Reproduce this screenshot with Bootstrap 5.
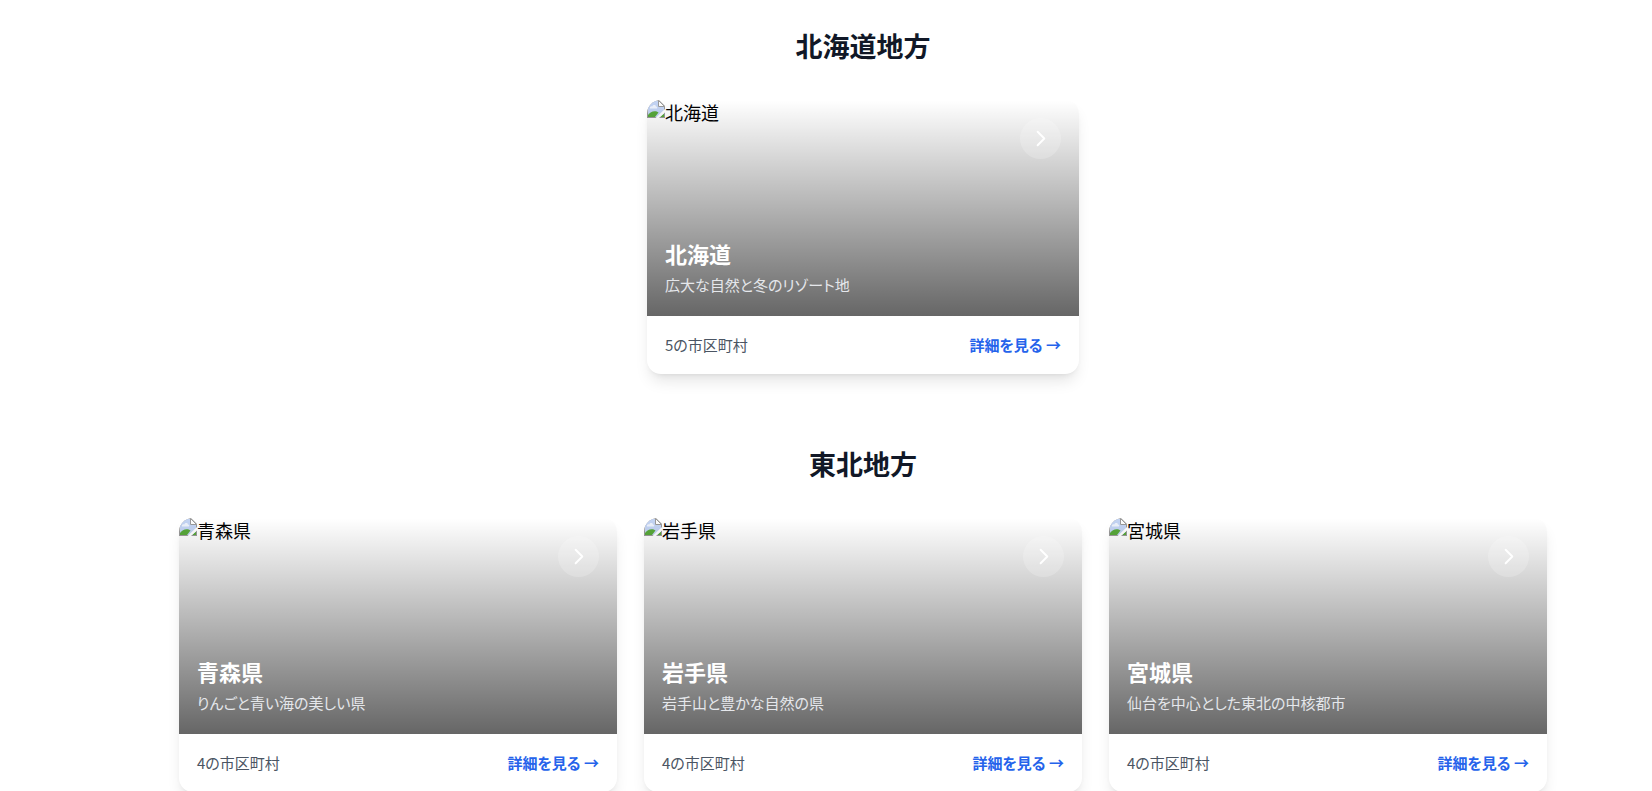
<!DOCTYPE html>
<html lang="ja">
<head>
<meta charset="utf-8">
<meta name="viewport" content="width=device-width, initial-scale=1">
<title>地方一覧</title>
<link href="https://cdn.jsdelivr.net/npm/bootstrap@5.3.0/dist/css/bootstrap.min.css" rel="stylesheet">
<style>
  body { font-family: "Noto Sans CJK JP", sans-serif; font-size: 18px; color: #000; background: #fff; }
  .regions { padding: 28px 36px 0 110px; }
  .regions-inner { max-width: 1368px; }
  .region { margin-bottom: 72px; }
  .region:last-child { margin-bottom: 0; }
  .region-title { font-size: 27px; line-height: 36px; font-weight: 600; color: #111827; margin-bottom: 36px; }
  .pref-grid { --bs-gutter-x: 27px; --bs-gutter-y: 27px; }
  .pref-single { max-width: 432px; }
  .pref-card { border: 0; border-radius: 14px; box-shadow: 0 10px 15px -3px rgba(0,0,0,.1), 0 4px 6px -4px rgba(0,0,0,.1); }
  .pref-photo { height: 216px; }
  .pref-alt { line-height: 25px; }
  .pref-alt svg { width: 18px; height: 18px; }
  .pref-shade { padding: 18px 18px 20px; background: linear-gradient(to top, rgba(0,0,0,.6), transparent); }
  .pref-name { font-size: 22px; line-height: 31px; font-weight: 700; margin-bottom: 5px; }
  .pref-copy { font-size: 15px; line-height: 22px; color: #e5e7eb; font-feature-settings: "palt"; }
  .pref-go { width: 41px; height: 41px; background: rgba(255,255,255,.2); }
  .pref-foot { padding: 18px; font-size: 15px; line-height: 22px; color: #4b5563; font-feature-settings: "palt"; }
  .pref-foot a { font-weight: 600; color: #2563eb; }
</style>
</head>
<body>
<svg class="d-none" aria-hidden="true">
  <symbol id="missing" viewBox="0 0 18 18">
    <path d="M0 0h12l6 6v12H0z" fill="#9a9a9a"/>
    <path d="M1 1h10.500L17 6.500V17H1z" fill="#c3d4f4"/>
    <path d="M3 8.500c-.4-1.800 1.200-2.700 2.300-2C6 4.500 8.600 4.600 9 6.500c1.400 0 1.700 1.500.8 2z" fill="#eef3fd"/>
    <path d="M1 17v-2c2.500-4 7.500-5 10.500-2.500L8 17z" fill="#58a83a"/>
    <path d="M13 17l4-3.500V17z" fill="#58a83a"/>
    <path d="M11.500.5V6.500h6z" fill="#fff" stroke="#9a9a9a"/>
    <path d="M18 9v3.500L12 18H8.500z" fill="#fff"/>
  </symbol>
  <symbol id="chevron" viewBox="0 0 24 24">
    <path d="M9 5l7 7-7 7" fill="none" stroke="#fff" stroke-width="2" stroke-linecap="round" stroke-linejoin="round"/>
  </symbol>
</svg>
<main class="regions vh-100 overflow-hidden">
  <div class="regions-inner mx-auto">
    <section class="region">
      <h2 class="region-title text-center">北海道地方</h2>
      <div class="pref-single mx-auto">
        <article class="card pref-card overflow-hidden">
          <div class="pref-photo position-relative">
            <div class="pref-alt d-flex align-items-start"><svg><use href="#missing"/></svg><span>北海道</span></div>
            <div class="pref-shade position-absolute top-0 start-0 w-100 h-100 d-flex flex-column justify-content-between">
              <span class="pref-go rounded-circle d-flex align-items-center justify-content-center align-self-end"><svg width="23" height="23"><use href="#chevron"/></svg></span>
              <div><h3 class="pref-name text-white">北海道</h3><p class="pref-copy mb-0">広大な自然と冬のリゾート地</p></div>
            </div>
          </div>
          <div class="pref-foot d-flex justify-content-between align-items-center"><span>5の市区町村</span><a href="#" class="text-decoration-none">詳細を見る →</a></div>
        </article>
      </div>
    </section>
    <section class="region">
      <h2 class="region-title text-center">東北地方</h2>
      <div class="row row-cols-1 row-cols-md-3 pref-grid">
        <div class="col">
          <article class="card pref-card overflow-hidden">
            <div class="pref-photo position-relative">
              <div class="pref-alt d-flex align-items-start"><svg><use href="#missing"/></svg><span>青森県</span></div>
              <div class="pref-shade position-absolute top-0 start-0 w-100 h-100 d-flex flex-column justify-content-between">
                <span class="pref-go rounded-circle d-flex align-items-center justify-content-center align-self-end"><svg width="23" height="23"><use href="#chevron"/></svg></span>
                <div><h3 class="pref-name text-white">青森県</h3><p class="pref-copy mb-0">りんごと青い海の美しい県</p></div>
              </div>
            </div>
            <div class="pref-foot d-flex justify-content-between align-items-center"><span>4の市区町村</span><a href="#" class="text-decoration-none">詳細を見る →</a></div>
          </article>
        </div>
        <div class="col">
          <article class="card pref-card overflow-hidden">
            <div class="pref-photo position-relative">
              <div class="pref-alt d-flex align-items-start"><svg><use href="#missing"/></svg><span>岩手県</span></div>
              <div class="pref-shade position-absolute top-0 start-0 w-100 h-100 d-flex flex-column justify-content-between">
                <span class="pref-go rounded-circle d-flex align-items-center justify-content-center align-self-end"><svg width="23" height="23"><use href="#chevron"/></svg></span>
                <div><h3 class="pref-name text-white">岩手県</h3><p class="pref-copy mb-0">岩手山と豊かな自然の県</p></div>
              </div>
            </div>
            <div class="pref-foot d-flex justify-content-between align-items-center"><span>4の市区町村</span><a href="#" class="text-decoration-none">詳細を見る →</a></div>
          </article>
        </div>
        <div class="col">
          <article class="card pref-card overflow-hidden">
            <div class="pref-photo position-relative">
              <div class="pref-alt d-flex align-items-start"><svg><use href="#missing"/></svg><span>宮城県</span></div>
              <div class="pref-shade position-absolute top-0 start-0 w-100 h-100 d-flex flex-column justify-content-between">
                <span class="pref-go rounded-circle d-flex align-items-center justify-content-center align-self-end"><svg width="23" height="23"><use href="#chevron"/></svg></span>
                <div><h3 class="pref-name text-white">宮城県</h3><p class="pref-copy mb-0">仙台を中心とした東北の中核都市</p></div>
              </div>
            </div>
            <div class="pref-foot d-flex justify-content-between align-items-center"><span>4の市区町村</span><a href="#" class="text-decoration-none">詳細を見る →</a></div>
          </article>
        </div>
      </div>
    </section>
  </div>
</main>
<script src="https://cdn.jsdelivr.net/npm/bootstrap@5.3.0/dist/js/bootstrap.bundle.min.js"></script>
</body>
</html>
